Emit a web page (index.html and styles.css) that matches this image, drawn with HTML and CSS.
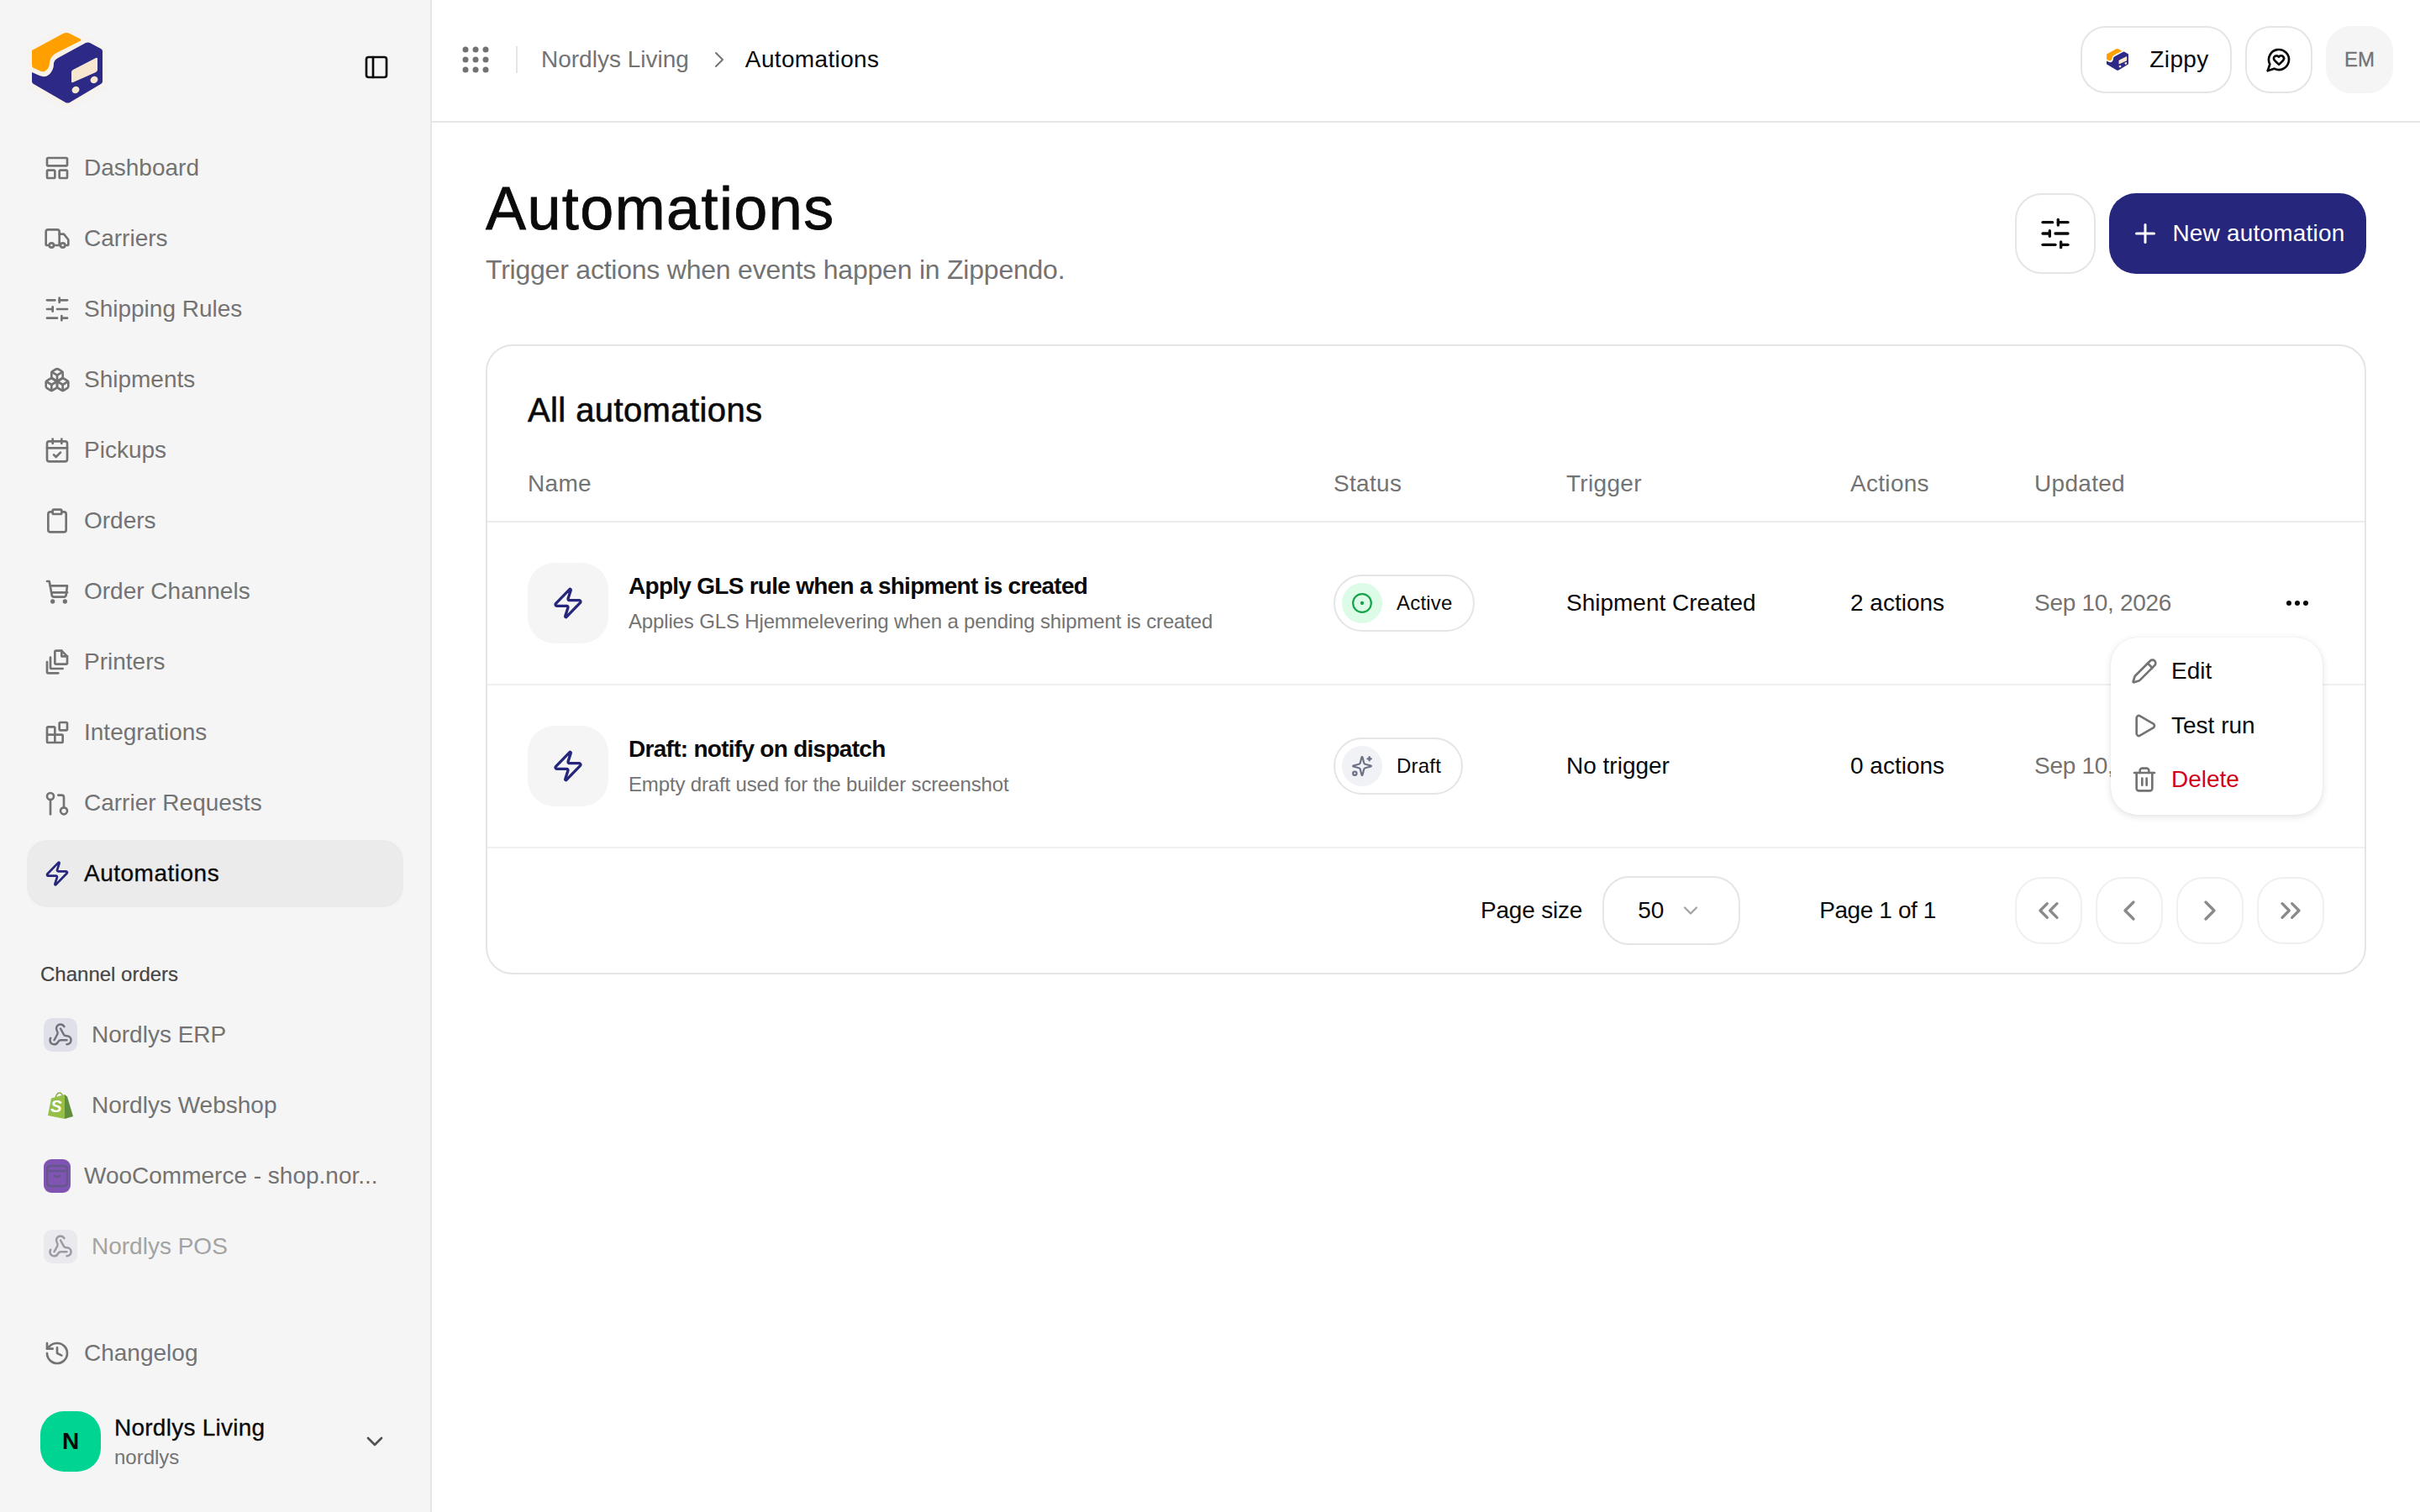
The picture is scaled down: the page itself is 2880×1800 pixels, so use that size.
FILE: index.html
```html
<!DOCTYPE html>
<html lang="en">
<head>
    <meta charset="UTF-8">
    <title>Automations</title>
    <link rel="stylesheet" href="styles.css">
</head>
<body>
    <!-- icon sprite -->
    <svg class="sprite" xmlns="http://www.w3.org/2000/svg">
        <symbol id="i-dashboard" viewBox="0 0 24 24"><rect x="3" y="3" width="18" height="7" rx="1"/><rect x="3" y="14" width="7" height="7" rx="1"/><rect x="14" y="14" width="7" height="7" rx="1"/></symbol>
        <symbol id="i-truck" viewBox="0 0 24 24"><path d="M14 18V6a2 2 0 0 0-2-2H4a2 2 0 0 0-2 2v11a1 1 0 0 0 1 1h2"/><path d="M15 18H9"/><path d="M19 18h2a1 1 0 0 0 1-1v-3.65a1 1 0 0 0-.22-.624l-3.48-4.35A1 1 0 0 0 17.52 8H14"/><circle cx="17" cy="18" r="2"/><circle cx="7" cy="18" r="2"/></symbol>
        <symbol id="i-sliders" viewBox="0 0 24 24"><path d="M21 4h-7"/><path d="M10 4H3"/><path d="M21 12h-9"/><path d="M8 12H3"/><path d="M21 20h-5"/><path d="M12 20H3"/><path d="M14 2v4"/><path d="M8 10v4"/><path d="M16 18v4"/></symbol>
        <symbol id="i-boxes" viewBox="0 0 24 24"><path d="M2.97 12.92A2 2 0 0 0 2 14.63v3.24a2 2 0 0 0 .97 1.71l3 1.8a2 2 0 0 0 2.06 0L12 19v-5.5l-5-3-4.03 2.42Z"/><path d="m7 16.5-4.74-2.85"/><path d="m7 16.5 5-3"/><path d="M7 16.5v5.17"/><path d="M12 13.5V19l3.97 2.38a2 2 0 0 0 2.06 0l3-1.8a2 2 0 0 0 .97-1.71v-3.24a2 2 0 0 0-.97-1.71L17 10.5l-5 3Z"/><path d="m17 16.5-5-3"/><path d="m17 16.5 4.74-2.85"/><path d="M17 16.5v5.17"/><path d="M7.97 4.42A2 2 0 0 0 7 6.13v4.37l5 3 5-3V6.13a2 2 0 0 0-.97-1.71l-3-1.8a2 2 0 0 0-2.06 0l-3 1.8Z"/><path d="M12 8 7.26 5.15"/><path d="m12 8 4.74-2.85"/><path d="M12 13.5V8"/></symbol>
        <symbol id="i-calendar" viewBox="0 0 24 24"><path d="M8 2v4"/><path d="M16 2v4"/><rect x="3" y="4" width="18" height="18" rx="2"/><path d="M3 10h18"/><path d="m9 16 2 2 4-4"/></symbol>
        <symbol id="i-clipboard" viewBox="0 0 24 24"><rect x="8" y="2" width="8" height="4" rx="1"/><path d="M16 4h2a2 2 0 0 1 2 2v14a2 2 0 0 1-2 2H6a2 2 0 0 1-2-2V6a2 2 0 0 1 2-2h2"/></symbol>
        <symbol id="i-cart" viewBox="0 0 24 24"><circle cx="8" cy="21" r="1"/><circle cx="19" cy="21" r="1"/><path d="M3 3h2l2.300 12.400a2 2 0 0 0 2 1.600h8.800a2 2 0 0 0 1.900-1.600L21 7H5.500"/><path d="M7 13h14"/></symbol>
        <symbol id="i-printers" viewBox="0 0 24 24"><path d="M11 2h5l5 5v6a1 1 0 0 1-1 1h-9a1 1 0 0 1-1-1V3a1 1 0 0 1 1-1z"/><path d="M16 2v5h5"/><path d="M6 8v9a1 1 0 0 0 1 1h10"/><path d="M3 12v9a1 1 0 0 0 1 1h9"/></symbol>
        <symbol id="i-blocks" viewBox="0 0 24 24"><rect x="14" y="3" width="7" height="7" rx="1"/><path d="M10 21V8a1 1 0 0 0-1-1H4a1 1 0 0 0-1 1v12a1 1 0 0 0 1 1h12a1 1 0 0 0 1-1v-5a1 1 0 0 0-1-1H3"/></symbol>
        <symbol id="i-request" viewBox="0 0 24 24"><circle cx="6" cy="6" r="3"/><path d="M6 9v13"/><circle cx="18" cy="19" r="3"/><path d="M18 16V7a2 2 0 0 0-2-2h-3"/></symbol>
        <symbol id="i-zap" viewBox="0 0 24 24"><path d="M4 14a1 1 0 0 1-.78-1.63l9.900-10.200a.5.5 0 0 1 .86.46l-1.920 6.020A1 1 0 0 0 13 10h7a1 1 0 0 1 .78 1.630l-9.900 10.200a.5.5 0 0 1-.86-.46l1.920-6.020A1 1 0 0 0 11 14z"/></symbol>
        <symbol id="i-webhook" viewBox="0 0 24 24"><path d="M18 16.980h-5.990c-1.100 0-1.950.94-2.480 1.900A4 4 0 0 1 2 17c.01-.7.2-1.400.57-2"/><path d="m6 17 3.130-5.780c.53-.97.1-2.180-.5-3.100a4 4 0 1 1 6.890-4.060"/><path d="m12 6 3.130 5.730C15.660 12.700 16.900 13 18 13a4 4 0 0 1 0 8"/></symbol>
        <symbol id="i-history" viewBox="0 0 24 24"><path d="M3 12a9 9 0 1 0 9-9 9.750 9.750 0 0 0-6.740 2.740L3 8"/><path d="M3 3v5h5"/><path d="M12 7v5l4 2"/></symbol>
        <symbol id="i-chevron-down" viewBox="0 0 24 24"><path d="m6 9 6 6 6-6"/></symbol>
        <symbol id="i-chevron-right" viewBox="0 0 24 24"><path d="m9 18 6-6-6-6"/></symbol>
        <symbol id="i-chevron-left" viewBox="0 0 24 24"><path d="m15 18-6-6 6-6"/></symbol>
        <symbol id="i-chevrons-left" viewBox="0 0 24 24"><path d="m11 17-5-5 5-5"/><path d="m18 17-5-5 5-5"/></symbol>
        <symbol id="i-chevrons-right" viewBox="0 0 24 24"><path d="m6 17 5-5-5-5"/><path d="m13 17 5-5-5-5"/></symbol>
        <symbol id="i-panel" viewBox="0 0 24 24"><rect x="3" y="3" width="18" height="18" rx="2"/><path d="M9 3v18"/></symbol>
        <symbol id="i-plus" viewBox="0 0 24 24"><path d="M5 12h14"/><path d="M12 5v14"/></symbol>
        <symbol id="i-pencil" viewBox="0 0 24 24"><path d="M21.174 6.812a1 1 0 0 0-3.986-3.987L3.842 16.174a2 2 0 0 0-.5.83l-1.321 4.352a.5.5 0 0 0 .623.622l4.353-1.32a2 2 0 0 0 .83-.497z"/><path d="m15 5 4 4"/></symbol>
        <symbol id="i-play" viewBox="0 0 24 24"><path d="M5 5a2 2 0 0 1 3.008-1.728l11.997 6.998a2 2 0 0 1 .003 3.458l-12 7A2 2 0 0 1 5 19z"/></symbol>
        <symbol id="i-trash" viewBox="0 0 24 24"><path d="M3 6h18"/><path d="M19 6v14c0 1-1 2-2 2H7c-1 0-2-1-2-2V6"/><path d="M8 6V4c0-1 1-2 2-2h4c1 0 2 1 2 2v2"/><path d="M10 11v6"/><path d="M14 11v6"/></symbol>
        <symbol id="i-chat" viewBox="0 0 24 24"><path d="M7.900 20A9 9 0 1 0 4 16.100L2 22Z"/><path d="M15.800 9.200a2.500 2.500 0 0 0-3.500 0l-.3.4-.35-.3a2.420 2.420 0 1 0-3.200 3.600l3.600 3.500 3.600-3.500c1.200-1.200 1.100-2.700.15-3.700Z"/></symbol>
        <symbol id="i-sparkles" viewBox="0 0 24 24"><path d="M9.937 15.500A2 2 0 0 0 8.500 14.063l-6.135-1.582a.5.5 0 0 1 0-.962L8.500 9.936A2 2 0 0 0 9.937 8.500l1.582-6.135a.5.5 0 0 1 .963 0L14.063 8.500A2 2 0 0 0 15.500 9.937l6.135 1.581a.5.5 0 0 1 0 .964L15.500 14.063a2 2 0 0 0-1.437 1.437l-1.582 6.135a.5.5 0 0 1-.963 0z"/><path d="M20 2v4"/><path d="M22 4h-4"/><circle cx="4" cy="20" r="2"/></symbol>
        <symbol id="i-circle-dot" viewBox="0 0 24 24"><circle cx="12" cy="12" r="10"/><circle cx="12" cy="12" r="1"/></symbol>
        <symbol id="logo" viewBox="0 0 110 110">
            <path fill="#ffa000" d="M13 34 50 14q4-2 8 0l12 6q3 2 0 3L44 36q-9 4-10 12 0 8-6 11-3 1-6-1l-7-3q-2-1-2-4z"/>
            <path fill="#2d2a87" d="M77 25q3-1 5 0l13 7q2 1 2 3v36q0 2-2 3L58 96q-3 1-5 0L15 74q-2-1-2-3V60l9 4q10 4 15-6 2-3 2-9 1-4 5-6z"/>
            <path fill="#f7e7d0" d="M60 60q0-2 2-3l27-14q2-1 2 1v13q0 2-2 3L62 72q-2 1-2-1z"/>
            <ellipse fill="#f7e7d0" cx="65" cy="81" rx="4.600" ry="4" transform="rotate(-30 65 81)"/>
            <ellipse fill="#f7e7d0" cx="87" cy="69" rx="4.600" ry="4" transform="rotate(-30 87 69)"/>
        </symbol>
    </svg>

    <div class="app">
        <aside class="sidebar">
            <div class="sidebar-top">
                <svg class="logo"><use href="#logo"/></svg>
                <svg class="icon icon-panel"><use href="#i-panel"/></svg>
            </div>

            <nav class="nav">
                <a class="nav-item"><svg class="icon"><use href="#i-dashboard"/></svg>Dashboard</a>
                <a class="nav-item"><svg class="icon"><use href="#i-truck"/></svg>Carriers</a>
                <a class="nav-item"><svg class="icon"><use href="#i-sliders"/></svg>Shipping Rules</a>
                <a class="nav-item"><svg class="icon"><use href="#i-boxes"/></svg>Shipments</a>
                <a class="nav-item"><svg class="icon"><use href="#i-calendar"/></svg>Pickups</a>
                <a class="nav-item"><svg class="icon"><use href="#i-clipboard"/></svg>Orders</a>
                <a class="nav-item"><svg class="icon"><use href="#i-cart"/></svg>Order Channels</a>
                <a class="nav-item"><svg class="icon"><use href="#i-printers"/></svg>Printers</a>
                <a class="nav-item"><svg class="icon"><use href="#i-blocks"/></svg>Integrations</a>
                <a class="nav-item"><svg class="icon"><use href="#i-request"/></svg>Carrier Requests</a>
                <a class="nav-item active"><svg class="icon"><use href="#i-zap"/></svg>Automations</a>
            </nav>

            <div class="nav-label">Channel orders</div>
            <nav class="nav">
                <a class="nav-item channel"><span class="channel-badge"><svg class="icon"><use href="#i-webhook"/></svg></span>Nordlys ERP</a>
                <a class="nav-item channel">
                    <svg class="shopify" viewBox="0 0 30 32">
                        <path fill="none" stroke="#7fa83c" stroke-width="1.400" d="M9 8Q10 1 14 1q3 0 4 6"/>
                        <path fill="#95bf47" d="M0 28 4 7.500 20 3v29z"/>
                        <path fill="#5e8e3e" d="M20 3l3 2.500L30 29l-10 3z"/>
                        <text class="shopify-s" x="10" y="24">S</text>
                    </svg>Nordlys Webshop</a>
                <a class="nav-item channel woo">
                    <svg class="woo-badge" viewBox="0 0 32 40">
                        <rect width="32" height="40" rx="9" fill="#7f54b3"/>
                        <g fill="none" stroke="#66578a" stroke-width="2.500"><rect x="4" y="8" width="24" height="24" rx="4"/><path d="M4 14h24"/><path d="M12 19q4 4 8 0"/></g>
                    </svg>WooCommerce - shop.nor...</a>
                <a class="nav-item channel muted"><span class="channel-badge"><svg class="icon"><use href="#i-webhook"/></svg></span>Nordlys POS</a>
            </nav>

            <div class="sidebar-bottom">
                <a class="nav-item"><svg class="icon"><use href="#i-history"/></svg>Changelog</a>
                <div class="org">
                    <div class="org-avatar">N</div>
                    <div class="org-text">
                        <div class="org-name">Nordlys Living</div>
                        <div class="org-slug">nordlys</div>
                    </div>
                    <svg class="icon org-chevron"><use href="#i-chevron-down"/></svg>
                </div>
            </div>
        </aside>

        <main class="main">
            <header class="topbar">
                <svg class="apps" viewBox="0 0 32 32">
                    <circle cx="4" cy="4" r="3.500"/><circle cx="16" cy="4" r="3.500"/><circle cx="28" cy="4" r="3.500"/>
                    <circle cx="4" cy="16" r="3.500"/><circle cx="16" cy="16" r="3.500"/><circle cx="28" cy="16" r="3.500"/>
                    <circle cx="4" cy="28" r="3.500"/><circle cx="16" cy="28" r="3.500"/><circle cx="28" cy="28" r="3.500"/>
                </svg>
                <span class="topbar-sep"></span>
                <span class="crumb">Nordlys Living</span>
                <svg class="icon crumb-chevron"><use href="#i-chevron-right"/></svg>
                <span class="crumb current">Automations</span>
                <div class="topbar-actions">
                    <button class="top-btn zippy"><svg class="zippy-logo"><use href="#logo"/></svg>Zippy</button>
                    <button class="top-btn square"><svg class="icon"><use href="#i-chat"/></svg></button>
                    <div class="user-chip">EM</div>
                </div>
            </header>

            <div class="page">
                <div class="page-head">
                    <div>
                        <h1>Automations</h1>
                        <p class="page-sub">Trigger actions when events happen in Zippendo.</p>
                    </div>
                    <div class="page-actions">
                        <button class="filter-btn"><svg class="icon icon-filter"><use href="#i-sliders"/></svg></button>
                        <button class="primary-btn"><svg class="icon icon-plus"><use href="#i-plus"/></svg>New automation</button>
                    </div>
                </div>

                <section class="card">
                    <h2 class="card-title">All automations</h2>

                    <div class="row row-head">
                        <div>Name</div><div>Status</div><div>Trigger</div><div>Actions</div><div>Updated</div>
                    </div>

                    <div class="row">
                        <div class="name-cell">
                            <div class="zap-box"><svg class="icon icon-zap"><use href="#i-zap"/></svg></div>
                            <div>
                                <div class="name-title">Apply GLS rule when a shipment is created</div>
                                <div class="name-sub">Applies GLS Hjemmelevering when a pending shipment is created</div>
                            </div>
                        </div>
                        <div><span class="badge"><span class="badge-dot green"><svg class="icon"><use href="#i-circle-dot"/></svg></span>Active</span></div>
                        <div>Shipment Created</div>
                        <div>2 actions</div>
                        <div class="updated-cell"><span class="updated">Sep 10, 2026</span>
                            <svg class="dots" viewBox="0 0 26 6"><circle cx="3" cy="3" r="3"/><circle cx="13" cy="3" r="3"/><circle cx="23" cy="3" r="3"/></svg>
                        </div>
                    </div>

                    <div class="row">
                        <div class="name-cell">
                            <div class="zap-box"><svg class="icon icon-zap"><use href="#i-zap"/></svg></div>
                            <div>
                                <div class="name-title">Draft: notify on dispatch</div>
                                <div class="name-sub">Empty draft used for the builder screenshot</div>
                            </div>
                        </div>
                        <div><span class="badge"><span class="badge-dot gray"><svg class="icon"><use href="#i-sparkles"/></svg></span>Draft</span></div>
                        <div>No trigger</div>
                        <div>0 actions</div>
                        <div class="updated-cell"><span class="updated">Sep 10, 2026</span></div>
                    </div>

                    <div class="pager">
                        <span class="pager-label">Page size</span>
                        <div class="page-select">50<svg class="icon"><use href="#i-chevron-down"/></svg></div>
                        <span class="pager-count">Page 1 of 1</span>
                        <div class="pager-btns">
                            <button class="pager-btn"><svg class="icon"><use href="#i-chevrons-left"/></svg></button>
                            <button class="pager-btn"><svg class="icon"><use href="#i-chevron-left"/></svg></button>
                            <button class="pager-btn"><svg class="icon"><use href="#i-chevron-right"/></svg></button>
                            <button class="pager-btn"><svg class="icon"><use href="#i-chevrons-right"/></svg></button>
                        </div>
                    </div>

                    <div class="menu">
                        <div class="menu-item"><svg class="icon"><use href="#i-pencil"/></svg>Edit</div>
                        <div class="menu-item"><svg class="icon"><use href="#i-play"/></svg>Test run</div>
                        <div class="menu-item danger"><svg class="icon"><use href="#i-trash"/></svg>Delete</div>
                    </div>
                </section>
            </div>
        </main>
    </div>
</body>
</html>
```

FILE: styles.css
```css
* {
    box-sizing: border-box;
}
body {
    margin: 0;
    background: #fff;
    color: #0a0a0a;
    font-family: "Liberation Sans", Arial, sans-serif;
    font-size: 28px;
}
button {
    font-family: inherit;
    font-size: 28px;
    color: inherit;
    background: transparent;
    padding: 0;
}
.sprite {
    display: none;
}
.icon {
    width: 32px;
    height: 32px;
    flex: none;
    fill: none;
    stroke: currentColor;
    stroke-width: 2;
    stroke-linecap: round;
    stroke-linejoin: round;
}
.app {
    display: flex;
    height: 1800px;
    overflow: hidden;
}

/* sidebar */
.sidebar {
    width: 514px;
    flex: none;
    display: flex;
    flex-direction: column;
    padding: 0 32px 48px;
    background: #f5f5f5;
    border-right: 2px solid #e5e5e5;
}
.sidebar-top {
    height: 160px;
    display: flex;
    align-items: flex-start;
    justify-content: space-between;
}
.logo {
    width: 110px;
    height: 110px;
    margin: 26px 0 0 -7px;
    filter: drop-shadow(0 2px 5px #fbefdf);
}
.icon-panel {
    color: #0a0a0a;
    margin: 64px 16px 0 0;
}
.nav {
    display: flex;
    flex-direction: column;
    gap: 4px;
}
.nav-item {
    height: 80px;
    display: flex;
    align-items: center;
    gap: 16px;
    padding-left: 20px;
    border-radius: 24px;
    color: #737373;
}
.nav-item.active {
    background: #ebebeb;
    color: #0a0a0a;
    letter-spacing: 0.5px;
    -webkit-text-stroke: 0.3px #0a0a0a;
}
.nav-item.active .icon {
    color: #26267d;
}
.nav-label {
    margin: 64px 0 16px 16px;
    height: 32px;
    line-height: 32px;
    font-size: 24px;
    color: #454545;
    -webkit-text-stroke: 0.2px #454545;
}
.channel {
    gap: 17px;
}
.channel.muted {
    color: #a3a3a3;
}
.channel-badge {
    width: 40px;
    height: 40px;
    flex: none;
    display: flex;
    align-items: center;
    justify-content: center;
    border-radius: 10px;
    background: #e0e1e8;
    color: #71717a;
}
.channel.muted .channel-badge {
    background: #e9e9ee;
    color: #9a9aa2;
}
.channel-badge .icon {
    width: 30px;
    height: 30px;
}
.shopify {
    width: 30px;
    height: 32px;
    flex: none;
    margin: 0 5px;
}
.shopify-s {
    font-size: 20px;
    font-weight: 700;
    font-style: italic;
    fill: #fff;
    text-anchor: middle;
}
.woo {
    gap: 16px;
}
.woo-badge {
    width: 32px;
    height: 40px;
    flex: none;
}
.sidebar-bottom {
    margin-top: auto;
}
.org {
    display: flex;
    align-items: center;
    margin: 29px 0 0 16px;
}
.org-avatar {
    width: 72px;
    height: 72px;
    flex: none;
    display: flex;
    align-items: center;
    justify-content: center;
    border-radius: 28px;
    background: #00d492;
    font-weight: 700;
    font-size: 28px;
}
.org-text {
    flex: 1;
    margin-left: 16px;
}
.org-name {
    line-height: 38px;
    letter-spacing: 0.25px;
    -webkit-text-stroke: 0.3px #0a0a0a;
}
.org-slug {
    font-size: 24px;
    line-height: 32px;
    color: #737373;
}
.org-chevron {
    color: #525252;
    margin-right: 18px;
}

/* top bar */
.main {
    flex: 1;
    min-width: 0;
}
.topbar {
    height: 146px;
    display: flex;
    align-items: center;
    padding: 0 32px 2px 36px;
    border-bottom: 2px solid #e5e5e5;
}
.apps {
    width: 32px;
    height: 32px;
    fill: #737373;
}
.topbar-sep {
    width: 2px;
    height: 32px;
    margin: 0 28px 0 32px;
    background: #e5e5e5;
}
.crumb {
    color: #737373;
}
.crumb.current {
    color: #0a0a0a;
    letter-spacing: 0.35px;
}
.crumb-chevron {
    margin: 0 15px 0 20px;
    color: #737373;
    stroke-width: 1.500;
}
.topbar-actions {
    margin-left: auto;
    display: flex;
    align-items: center;
    gap: 16px;
}
.top-btn {
    height: 80px;
    display: flex;
    align-items: center;
    justify-content: center;
    border: 2px solid #e5e5e5;
    border-radius: 30px;
    background: #fff;
}
.zippy {
    width: 180px;
    gap: 21px;
    letter-spacing: 0.4px;
}
.zippy-logo {
    width: 34px;
    height: 34px;
}
.square {
    width: 80px;
}
.user-chip {
    width: 80px;
    height: 80px;
    display: flex;
    align-items: center;
    justify-content: center;
    border-radius: 30px;
    background: #f5f5f5;
    color: #737373;
    font-size: 24px;
    -webkit-text-stroke: 0.3px #737373;
}

/* page */
.page {
    padding: 62px 64px 0;
}
.page-head {
    display: flex;
    justify-content: space-between;
    align-items: flex-start;
}
h1 {
    margin: 0;
    font-size: 72px;
    line-height: 80px;
    font-weight: 400;
    letter-spacing: 1.400px;
    -webkit-text-stroke: 0.8px #0a0a0a;
}
.page-sub {
    margin: 9px 0 0;
    font-size: 32px;
    line-height: 48px;
    letter-spacing: -0.22px;
    color: #737373;
}
.page-actions {
    display: flex;
    gap: 16px;
    margin-top: 22px;
}
.filter-btn {
    width: 96px;
    height: 96px;
    display: flex;
    align-items: center;
    justify-content: center;
    border: 2px solid #e5e5e5;
    border-radius: 32px;
    background: #fff;
}
.icon-filter {
    width: 40px;
    height: 40px;
}
.primary-btn {
    width: 306px;
    height: 96px;
    display: flex;
    align-items: center;
    justify-content: center;
    gap: 14px;
    border: 0;
    border-radius: 32px;
    background: #26267d;
    color: #fff;
    letter-spacing: 0.2px;
}
.icon-plus {
    width: 36px;
    height: 36px;
}

/* table card */
.card {
    position: relative;
    height: 750px;
    margin-top: 65px;
    border: 2px solid #e5e5e5;
    border-radius: 32px;
}
.card-title {
    margin: 0;
    padding: 48px 48px 12px;
    font-size: 40px;
    line-height: 56px;
    font-weight: 400;
    letter-spacing: 0.4px;
    -webkit-text-stroke: 0.6px #0a0a0a;
}
.row {
    display: grid;
    grid-template-columns: 959px 277px 338px 219px 1fr;
    align-items: center;
    height: 194px;
    padding: 0 48px;
    border-bottom: 2px solid #f0f0f0;
}
.row-head {
    height: 94px;
    padding-top: 3px;
    color: #737373;
    letter-spacing: 0.3px;
    border-bottom-color: #ececec;
}
.name-cell {
    display: flex;
    align-items: center;
    gap: 24px;
}
.zap-box {
    width: 96px;
    height: 96px;
    display: flex;
    align-items: center;
    justify-content: center;
    border-radius: 32px;
    background: #f5f5f5;
}
.icon-zap {
    width: 40px;
    height: 40px;
    color: #26267d;
}
.name-title {
    font-weight: 700;
    line-height: 40px;
    letter-spacing: -0.72px;
}
.name-sub {
    margin-top: 4px;
    font-size: 24px;
    line-height: 36px;
    letter-spacing: -0.15px;
    color: #737373;
}
.badge {
    display: inline-flex;
    align-items: center;
    height: 68px;
    padding: 0 24px 0 8px;
    gap: 17px;
    border: 2px solid #e5e5e5;
    border-radius: 34px;
    font-size: 24px;
    letter-spacing: 0.2px;
}
.badge-dot {
    width: 48px;
    height: 48px;
    display: flex;
    align-items: center;
    justify-content: center;
    border-radius: 50%;
}
.badge-dot.green {
    background: #dcfce7;
    color: #16a34a;
}
.badge-dot.gray {
    background: #f1f2f5;
    color: #6b7085;
}
.badge-dot .icon {
    width: 26px;
    height: 26px;
}
.updated-cell {
    display: flex;
    align-items: center;
    justify-content: space-between;
}
.updated {
    color: #737373;
    letter-spacing: -0.3px;
}
.dots {
    width: 26px;
    height: 6px;
    fill: #0a0a0a;
    margin-right: 19px;
}
.pager {
    height: 148px;
    display: flex;
    align-items: center;
    justify-content: flex-end;
    padding-right: 48px;
}
.pager-label {
    letter-spacing: -0.2px;
}
.pager-count {
    letter-spacing: -0.4px;
}
.page-select {
    width: 164px;
    height: 82px;
    margin: 0 94px 0 24px;
    display: flex;
    align-items: center;
    padding-left: 40px;
    gap: 18px;
    border: 2px solid #e5e5e5;
    border-radius: 32px;
}
.page-select .icon {
    width: 28px;
    height: 28px;
    color: #a3a3a3;
}
.pager-btns {
    display: flex;
    gap: 16px;
    margin-left: 94px;
}
.pager-btn {
    width: 80px;
    height: 80px;
    display: flex;
    align-items: center;
    justify-content: center;
    border: 2px solid #f0f0f0;
    border-radius: 32px;
    background: #fff;
    color: #8a8a8a;
}
.pager-btn .icon {
    width: 40px;
    height: 40px;
}
.menu {
    position: absolute;
    top: 347px;
    right: 50px;
    width: 252px;
    height: 211px;
    padding: 8px 24px;
    border-radius: 32px;
    background: #fff;
    box-shadow: 0 2px 8px rgba(0, 0, 0, 0.12), 0 0 1px rgba(0, 0, 0, 0.1);
}
.menu-item {
    height: 64.500px;
    display: flex;
    align-items: center;
    gap: 16px;
}
.menu-item .icon {
    color: #737373;
}
.menu-item.danger {
    color: #d2001a;
}
```
